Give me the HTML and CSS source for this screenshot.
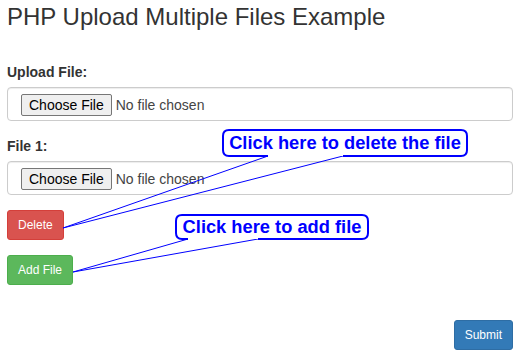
FILE: index.html
```html
<!DOCTYPE html>
<html lang="en">
<head>
<meta charset="utf-8">
<title>PHP Upload Multiple Files Example</title>
<link rel="stylesheet" href="styles.css">
</head>
<body>
<div class="page">
  <h3 class="title">PHP Upload Multiple Files Example</h3>
  <form class="form">
    <div class="group">
      <label class="label">Upload File:</label>
      <div class="file-input"><span class="file-btn">Choose File</span><span class="file-status">No file chosen</span></div>
    </div>
    <div class="group">
      <label class="label">File 1:</label>
      <div class="file-input"><span class="file-btn">Choose File</span><span class="file-status">No file chosen</span></div>
    </div>
    <div class="actions">
      <button type="button" class="btn btn-danger">Delete</button>
      <button type="button" class="btn btn-success">Add File</button>
    </div>
    <div class="submit-row">
      <button type="button" class="btn btn-primary">Submit</button>
    </div>
  </form>

  <svg class="annotations" width="522" height="363" viewBox="0 0 522 363" xmlns="http://www.w3.org/2000/svg">
    <g fill="none" stroke="#0000ff" stroke-width="1">
      <line x1="268" y1="156" x2="63" y2="228"/>
      <line x1="343" y1="156" x2="63" y2="228"/>
      <line x1="188" y1="239" x2="73" y2="272"/>
      <line x1="258" y1="239" x2="73" y2="272"/>
    </g>
    <g fill="#ffffff" stroke="#0000ff" stroke-width="2" stroke-linejoin="round">
      <path d="M 343 156 L 461 156 Q 467 156 467 150 L 467 136 Q 467 130 461 130 L 229 130 Q 223 130 223 136 L 223 150 Q 223 156 229 156 L 268 156"/>
      <path d="M 258 239 L 362 239 Q 368 239 368 233 L 368 221 Q 368 215 362 215 L 182 215 Q 176 215 176 221 L 176 233 Q 176 239 182 239 L 188 239"/>
    </g>
  </svg>
  <div class="callout callout-delete">Click here to delete the file</div>
  <div class="callout callout-add">Click here to add file</div>
</div>
</body>
</html>
```

FILE: styles.css
```css
* {
  box-sizing: border-box;
}

html, body {
  margin: 0;
  padding: 0;
  background: #ffffff;
}

body {
  font-family: "Liberation Sans", Arial, sans-serif;
  color: #333333;
  font-size: 14px;
}

.page {
  position: relative;
  width: 522px;
  height: 363px;
  padding: 4px 9px 0 7px;
  overflow: hidden;
}

.title {
  margin: 0 0 32px;
  font-size: 24px;
  line-height: 26px;
  font-weight: normal;
  color: #333333;
}

.form {
  margin: 0;
}

.group {
  margin-bottom: 15px;
}

.label {
  display: block;
  font-weight: bold;
  font-size: 14px;
  line-height: 20px;
  margin-bottom: 5px;
  color: #333333;
}

.file-input {
  display: flex;
  align-items: flex-start;
  height: 34px;
  border: 1px solid #cccccc;
  border-radius: 4px;
  padding: 6px 12px 0 13px;
  box-shadow: inset 0 1px 1px rgba(0, 0, 0, 0.075);
  background: #ffffff;
}

.file-btn {
  display: inline-block;
  height: 22px;
  padding: 0 7px;
  line-height: 20px;
  font-size: 14px;
  color: #000000;
  background: #efefef;
  border: 1px solid #767676;
  border-radius: 2px;
  margin-right: 4px;
  white-space: nowrap;
}

.file-status {
  line-height: 22px;
  font-size: 14px;
  color: #444444;
  white-space: nowrap;
}

.actions {
  display: flex;
  flex-direction: column;
  align-items: flex-start;
  gap: 15px;
}

.submit-row {
  display: flex;
  justify-content: flex-end;
  margin-top: 35px;
}

.btn {
  display: inline-block;
  font-family: "Liberation Sans", Arial, sans-serif;
  font-size: 12px;
  line-height: 18px;
  padding: 5px 10px;
  border: 1px solid transparent;
  border-radius: 3px;
  color: #ffffff;
  cursor: pointer;
  margin: 0;
}

.btn-danger {
  background: #d9534f;
  border-color: #d43f3a;
}

.btn-success {
  background: #5cb85c;
  border-color: #4cae4c;
}

.btn-primary {
  background: #337ab7;
  border-color: #2e6da4;
}

.annotations {
  position: absolute;
  top: 0;
  left: 0;
  pointer-events: none;
}

.callout {
  position: absolute;
  display: flex;
  align-items: center;
  justify-content: center;
  font-family: "Liberation Sans", Arial, sans-serif;
  font-weight: bold;
  font-size: 18.3px;
  line-height: 20px;
  color: #0000ff;
  white-space: nowrap;
}

.callout-delete {
  left: 222px;
  top: 129px;
  width: 246px;
  height: 28px;
}

.callout-add {
  left: 175px;
  top: 214px;
  width: 194px;
  height: 26px;
}
```
